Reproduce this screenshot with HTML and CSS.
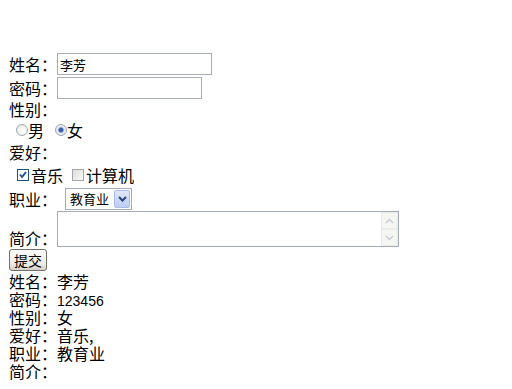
FILE: index.html
```html
<!DOCTYPE html>
<html>
<head>
<meta charset="UTF-8">
<title>表单</title>
<link rel="stylesheet" href="styles.css">
</head>
<body>
<div class="page">
  <form class="form" id="myForm">
    <div class="row row-name">姓名：<input type="text" class="field name" value="李芳"></div>
    <div class="row row-pwd">密码：<input type="password" class="field pwd" value=""></div>
    <div class="line">性别：</div>
    <div class="row row-opt">
      <label class="opt opt-radio"><input type="radio" name="sex" class="radio">男</label>
      <label class="opt opt-radio"><input type="radio" name="sex" class="radio" checked>女</label>
    </div>
    <div class="line line-tall">爱好：</div>
    <div class="row row-opt">
      <label class="opt opt-check"><input type="checkbox" class="check" checked>音乐</label>
      <label class="opt opt-check"><input type="checkbox" class="check">计算机</label>
    </div>
    <div class="row row-job">职业：
      <span class="combo">
        <span class="combo-text">教育业</span>
        <span class="combo-btn">
          <svg width="9" height="6" viewBox="0 0 9 6"><path d="M1 1 L4.5 4.5 L8 1" fill="none" stroke="#26467f" stroke-width="2"/></svg>
        </span>
      </span>
    </div>
    <div class="row row-intro">简介：
      <span class="memo">
        <textarea class="memo-text"></textarea>
        <span class="memo-bar">
          <span class="memo-arrow">
            <svg width="9" height="6" viewBox="0 0 9 6"><path d="M1 5 L4.5 1.5 L8 5" fill="none" stroke="#c9cdd6" stroke-width="1.5"/></svg>
          </span>
          <span class="memo-arrow">
            <svg width="9" height="6" viewBox="0 0 9 6"><path d="M1 1 L4.5 4.5 L8 1" fill="none" stroke="#c9cdd6" stroke-width="1.5"/></svg>
          </span>
        </span>
      </span>
    </div>
    <div class="row row-btn"><button type="button" class="submit-btn">提交</button></div>
  </form>

  <div class="result">
    <div class="line">姓名：李芳</div>
    <div class="line">密码：<span class="num">123456</span></div>
    <div class="line">性别：女</div>
    <div class="line">爱好：音乐,</div>
    <div class="line">职业：教育业</div>
    <div class="line">简介：</div>
  </div>
</div>
</body>
</html>
```

FILE: styles.css
```css
body {
  margin: 0;
  background-color: #fff;
  color: #000;
  font-family: "Noto Sans CJK SC", "DejaVu Sans", sans-serif;
  font-size: 16px;
}

.page {
  padding: 52px 8px 0 9px;
}

.row {
  display: flex;
  align-items: center;
  line-height: 18px;
}

.line {
  height: 18px;
  line-height: 18px;
}

.line-tall {
  height: 21px;
  line-height: 21px;
}

.row-name,
.row-pwd {
  height: 24px;
}

.field {
  box-sizing: border-box;
  height: 22px;
  margin: 0;
  padding: 1px 2px;
  border: 1px solid #a5acb5;
  font-family: "Noto Sans CJK SC", sans-serif;
  font-size: 13px;
  color: #000;
  outline: none;
}

.name {
  width: 155px;
}

.pwd {
  width: 145px;
}

.row-opt {
  height: 24px;
  padding-left: 7px;
}

.opt {
  display: flex;
  align-items: center;
}

.opt-radio {
  margin-right: 11px;
}

.opt-check {
  margin-right: 8px;
}

.radio {
  appearance: none;
  box-sizing: border-box;
  width: 12px;
  height: 12px;
  margin: 0;
  border: 1px solid #a3a7ad;
  border-radius: 50%;
  background: radial-gradient(circle at 60% 65%, #fff 0, #f1f1ee 60%, #d8d8d2 100%);
}

.radio:checked {
  background: radial-gradient(circle, #2f4f9c 0, #4a6bb8 2px, #c9d4ea 3px, #eef0f4 4px, #dcdcd8 100%);
}

.check {
  appearance: none;
  box-sizing: border-box;
  width: 12px;
  height: 12px;
  margin: 0 2px 0 1px;
  border: 1px solid #a3a7ad;
  background: linear-gradient(135deg, #dcdcd7, #fbfbfa);
}

.check:checked {
  border-color: #1d5281;
  background: #fff url("data:image/svg+xml;utf8,<svg xmlns='http://www.w3.org/2000/svg' width='10' height='10'><path d='M2 4.5 L4 7 L8 2' fill='none' stroke='%23224e96' stroke-width='2'/></svg>") center no-repeat;
}

.row-job {
  height: 24px;
}

.combo {
  display: flex;
  align-items: center;
  box-sizing: border-box;
  width: 67px;
  height: 22px;
  margin-left: 8px;
  padding: 1px;
  border: 1px solid #a5acb5;
  font-size: 13px;
}

.combo-text {
  flex: 1;
  padding-left: 3px;
}

.combo-btn {
  display: flex;
  align-items: center;
  justify-content: center;
  box-sizing: border-box;
  width: 16px;
  height: 18px;
  border: 1px solid #a7bde8;
  border-radius: 2px;
  background: linear-gradient(#dfe7f9, #bccdf4);
}

.row-intro {
  align-items: flex-end;
  height: 36px;
}

.memo {
  display: flex;
  box-sizing: border-box;
  width: 342px;
  height: 36px;
  border: 1px solid #a5acb5;
}

.memo-text {
  flex: 1;
  border: none;
  margin: 0;
  padding: 0;
  resize: none;
  outline: none;
}

.memo-bar {
  display: flex;
  flex-direction: column;
  justify-content: space-between;
  width: 17px;
  background: #fbfbf9;
}

.memo-arrow {
  display: flex;
  align-items: center;
  justify-content: center;
  box-sizing: border-box;
  height: 17px;
  border: 1px solid #ebebe6;
  background: #f5f5f2;
}

.row-btn {
  height: 24px;
  padding-top: 1px;
}

.submit-btn {
  box-sizing: border-box;
  width: 38px;
  height: 22px;
  padding: 0;
  border: 1px solid #6f6f6a;
  border-radius: 3px;
  background: linear-gradient(#fefefd, #ecebe6 70%, #d6d0c5);
  font-family: "Noto Sans CJK SC", sans-serif;
  font-size: 14px;
  line-height: 18px;
  color: #000;
}

.num {
  font-family: "Liberation Sans", sans-serif;
  font-size: 14px;
}
```
